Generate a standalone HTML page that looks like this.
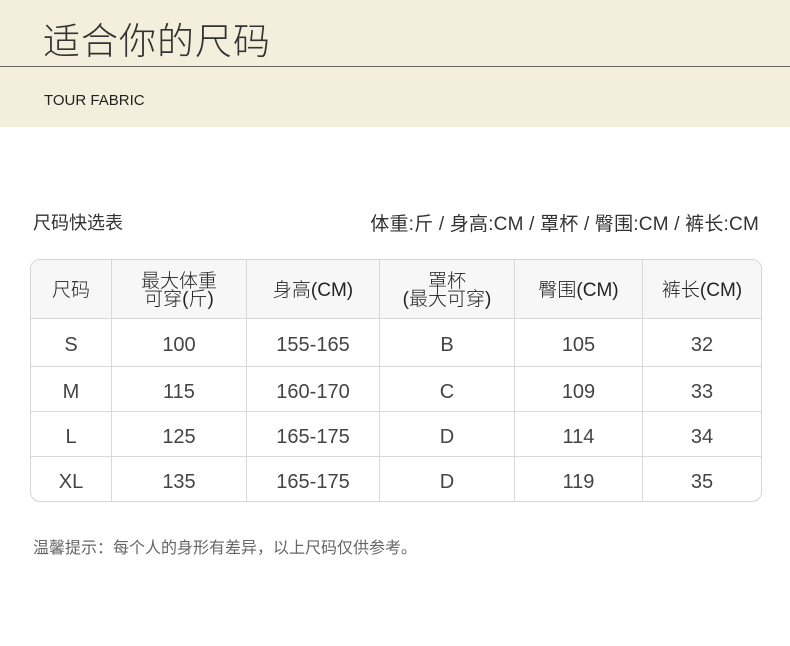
<!DOCTYPE html>
<html><head><meta charset="utf-8"><style>
body{margin:0;width:790px;height:646px;background:#fff;font-family:"Liberation Sans","Noto Sans CJK SC",sans-serif;position:relative;overflow:hidden}
.hd{position:absolute;left:0;top:0;width:790px;height:127px;background:#f4eedc}
.t1{position:absolute;left:43px;top:11px;font-size:37px;font-weight:300;color:#333;letter-spacing:1px}
.ln{position:absolute;left:0;top:66px;width:790px;height:1px;background:#666}
.t2{position:absolute;left:44px;top:92px;font-size:15px;color:#222}
.l{position:absolute;left:33px;top:209px;font-size:18px;color:#333}
.r{position:absolute;right:31px;top:209px;font-size:19px;color:#333;letter-spacing:0.2px}
table{position:absolute;left:30px;top:259px;width:732px;border-collapse:separate;border-spacing:0;border:1px solid #d4d4d4;border-radius:10px;overflow:hidden}
td{border-right:1px solid #d9d9d9;border-bottom:1px solid #d9d9d9;text-align:center;font-size:20px;color:#444;padding:6px 0 0 0;font-weight:300}
td:last-child{border-right:none}
tr:last-child td{border-bottom:none}
tr.h td{background:#f7f7f7;height:55px;font-size:19px;color:#222;line-height:18px;padding:3px 0 0}
.ft{position:absolute;left:33px;top:534px;font-size:16px;color:#666}
</style></head><body>
<div class="hd"><div class="t1">适合你的尺码</div><div class="ln"></div><div class="t2">TOUR FABRIC</div></div>
<div class="l">尺码快选表</div>
<div class="r">体重:斤 / 身高:CM / 罩杯 / 臀围:CM / 裤长:CM</div>
<table>
<tr class="h"><td style="width:80px">尺码</td><td style="width:134px">最大体重<br>可穿(斤)</td><td style="width:132px">身高(CM)</td><td style="width:134px">罩杯<br>(最大可穿)</td><td style="width:127px">臀围(CM)</td><td>裤长(CM)</td></tr>
<tr style="height:48px"><td>S</td><td>100</td><td>155-165</td><td>B</td><td>105</td><td>32</td></tr>
<tr style="height:45px"><td>M</td><td>115</td><td>160-170</td><td>C</td><td>109</td><td>33</td></tr>
<tr style="height:45px"><td>L</td><td>125</td><td>165-175</td><td>D</td><td>114</td><td>34</td></tr>
<tr style="height:44px"><td>XL</td><td>135</td><td>165-175</td><td>D</td><td>119</td><td>35</td></tr>
</table>
<div class="ft">温馨提示：每个人的身形有差异，以上尺码仅供参考。</div>
</body></html>
